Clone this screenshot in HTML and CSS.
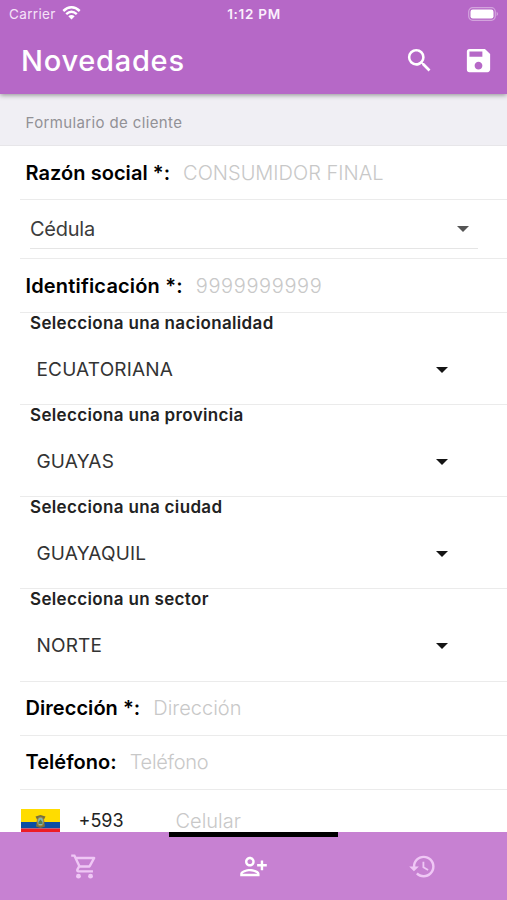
FILE: index.html
```html
<!DOCTYPE html>
<html lang="es">
<head>
<meta charset="utf-8">
<title>Novedades</title>
<link rel="stylesheet" href="styles.css">
</head>
<body>
<div class="app">
  <header class="header">
    <div class="status">
      <div class="carrier"><span>Carrier</span>
        <svg class="wifi" viewBox="0 0 18 14"><path d="M.8 5Q9-2.400 17.200 5M3.700 8.100Q9 3.500 14.300 8.100" fill="none" stroke="#fff" stroke-width="2.500"/><path d="M9 13.500 5.800 10.300Q9 7.800 12.200 10.300Z" fill="#fff"/></svg>
      </div>
      <span class="clock">1:12 PM</span>
      <svg class="battery" viewBox="0 0 31 14"><rect x=".7" y=".7" width="26.6" height="12.6" rx="4" fill="none" stroke="#fff" stroke-opacity=".4" stroke-width="1.2"/><rect x="2.5" y="2.5" width="23" height="9" rx="2.2" fill="#fff"/><path d="M28.7 4.8Q31 7 28.7 9.2Z" fill="#fff" fill-opacity=".5"/></svg>
    </div>
    <div class="toolbar">
      <h1>Novedades</h1>
      <svg class="action" viewBox="0 0 24 24"><path d="M15.5 14h-.79l-.28-.27A6.47 6.47 0 0 0 16 9.5 6.5 6.5 0 1 0 9.5 16c1.61 0 3.09-.59 4.23-1.57l.27.28v.79l5 4.99L20.49 19l-4.99-5zm-6 0C7.01 14 5 11.99 5 9.5S7.01 5 9.5 5 14 7.01 14 9.5 11.99 14 9.5 14z"/></svg>
      <svg class="action" viewBox="0 0 24 24"><path d="M17 3H5a2 2 0 0 0-2 2v14a2 2 0 0 0 2 2h14c1.1 0 2-.9 2-2V7l-4-4zm-5 16c-1.66 0-3-1.34-3-3s1.34-3 3-3 3 1.34 3 3-1.34 3-3 3zm3-10H5V5h10v4z"/></svg>
    </div>
  </header>
  <main class="form">
    <div class="section"><span>Formulario de cliente</span></div>
    <div class="row"><label>Razón social *:</label><span class="hint">CONSUMIDOR FINAL</span></div>
    <div class="row type"><div class="picker"><span>Cédula</span><svg class="caret" viewBox="0 0 12 6"><path d="M0 0h12L6 6z"/></svg></div></div>
    <div class="row"><label class="ident">Identificación *:</label><span class="hint digits">9999999999</span></div>
    <div class="select"><b>Selecciona una nacionalidad</b><div class="value"><span>ECUATORIANA</span><svg class="caret" viewBox="0 0 12 6"><path d="M0 0h12L6 6z"/></svg></div></div>
    <div class="select"><b>Selecciona una provincia</b><div class="value"><span>GUAYAS</span><svg class="caret" viewBox="0 0 12 6"><path d="M0 0h12L6 6z"/></svg></div></div>
    <div class="select"><b>Selecciona una ciudad</b><div class="value"><span>GUAYAQUIL</span><svg class="caret" viewBox="0 0 12 6"><path d="M0 0h12L6 6z"/></svg></div></div>
    <div class="select last"><b>Selecciona un sector</b><div class="value"><span>NORTE</span><svg class="caret" viewBox="0 0 12 6"><path d="M0 0h12L6 6z"/></svg></div></div>
    <div class="row low"><label>Dirección *:</label><span class="hint">Dirección</span></div>
    <div class="row low"><label>Teléfono:</label><span class="hint tight">Teléfono</span></div>
    <div class="phone">
      <svg class="flag" viewBox="0 0 39 26"><path fill="#ffdc00" d="M0 0h39v13H0z"/><path fill="#0b4ea2" d="M0 13h39v6.5H0z"/><path fill="#ed1c24" d="M0 19.5h39V26H0z"/><path d="M14.5 7.5 19.5 6l5 1.5-1.5 3 1 7-4.500 1.500-4.500-1.500 1-7z" fill="#77713f"/><ellipse cx="19.500" cy="12.500" rx="3" ry="4.200" fill="#82b8b4" stroke="#b78a35"/><path d="M17.500 13l2-2.500 2 2.500v2h-4z" fill="#567e52"/></svg>
      <span class="code">+593</span><span class="hint">Celular</span>
    </div>
  </main>
  <nav class="tabs">
    <div class="tab"><svg viewBox="0 0 24 24"><path d="M15.550 13c.75 0 1.410-.410 1.750-1.030l3.580-6.490A.996.996 0 0 0 20.010 4H5.210l-.94-2H1v2h2l3.600 7.590-1.350 2.440C4.520 15.370 5.480 17 7 17h12v-2H7l1.100-2h7.450zM6.160 6h12.150l-2.760 5H8.530L6.160 6z"/><circle cx="7" cy="20" r="2"/><circle cx="17" cy="20" r="2"/></svg></div>
    <div class="tab active"><svg viewBox="0 0 24 24"><path d="M13 8c0-2.210-1.790-4-4-4S5 5.790 5 8s1.790 4 4 4 4-1.790 4-4zm-2 0c0 1.100-.9 2-2 2s-2-.9-2-2 .9-2 2-2 2 .9 2 2zM1 18v2h16v-2c0-2.660-5.330-4-8-4s-8 1.340-8 4zm2 0c.2-.71 3.300-2 6-2 2.690 0 5.770 1.280 6 2H3zm17-3v-3h3v-2h-3V7h-2v3h-3v2h3v3h2z"/></svg></div>
    <div class="tab"><svg viewBox="0 0 24 24"><path d="M13 3a9 9 0 0 0-9 9H1l3.890 3.890.07.140L9 12H6c0-3.870 3.130-7 7-7s7 3.130 7 7-3.130 7-7 7c-1.930 0-3.680-.790-4.940-2.060l-1.420 1.420A8.954 8.954 0 0 0 13 21a9 9 0 0 0 0-18zm-1 5v5l4.280 2.540.72-1.210-3.500-2.080V8H12z"/></svg></div>
  </nav>
</div>
</body>
</html>
```
FILE: styles.css
```css
* { box-sizing: border-box; }
body { margin: 0; background: #fff; font-family: Inter, "Liberation Sans", sans-serif; }
.app { width: 507px; height: 900px; display: flex; flex-direction: column; overflow: hidden; }
svg { display: block; flex: none; }
span, label, b, h1 { white-space: nowrap; }
.header { height: 94px; flex: none; background: #b668c7; color: #fff; box-shadow: 0 1px 5px rgba(0,0,0,.42); z-index: 1; }
.status { height: 27px; padding: 0 8px 0 9px; display: grid; grid-template-columns: 1fr auto 1fr; align-items: center; font-size: 13px; }
.carrier { display: flex; align-items: center; gap: 6px; font-size: 13.5px; letter-spacing: .35px; color: #f5e3f8; }
.wifi { width: 19px; height: 14px; margin-top: -2px; }
.clock { font-size: 13.5px; font-weight: 600; letter-spacing: .7px; color: #fbeffd; }
.battery { width: 31px; height: 14px; justify-self: end; }
.toolbar { height: 67px; display: flex; align-items: center; padding: 0 13.5px 0 21px; gap: 28px; }
.toolbar .action { margin-top: -1px; }
h1 { flex: 1; margin: 0; font-size: 29px; line-height: 36px; font-weight: 500; letter-spacing: .75px; }
.action { width: 31px; height: 31px; fill: #fff; }
.form { height: 738px; flex: none; overflow: hidden; }
.section { height: 52px; background: #f0eff4; border-bottom: 1px solid #e7e6e9; padding: 5px 0 0 25.5px; display: flex; align-items: center; font-size: 15px; letter-spacing: .37px; color: #929196; }
.row { height: 54px; margin-left: 20px; padding-left: 5.5px; display: flex; align-items: center; gap: 13px; border-bottom: 1px solid #ebebeb; font-size: 20px; }
.row label { font-weight: 600; letter-spacing: .05px; color: #000; }
.row .ident { letter-spacing: .17px; }
.hint { color: #c8c8c8; font-weight: 300; font-size: 20px; }
.digits { letter-spacing: .64px; }
.tight { letter-spacing: -.3px; }
.low { padding-bottom: 2px; }
.type { height: 59px; padding: 0 29px 0 10px; }
.picker { flex: 1; height: 38px; display: flex; align-items: center; justify-content: space-between; padding-right: 9px; margin-top: 1px; border-bottom: 1px solid #e5e5e5; letter-spacing: -.25px; color: #3c3c3c; }
.caret { width: 12px; height: 6px; fill: #141414; }
.picker .caret { fill: #555; }
.select { height: 92px; margin-left: 20px; padding: 0 59px 0 10px; border-bottom: 1px solid #ebebeb; color: #222; }
.last { height: 93px; }
.select b { display: block; height: 20px; line-height: 20px; font-size: 17px; font-weight: 600; letter-spacing: .34px; }
.value { height: 73px; padding-left: 6.5px; display: flex; align-items: center; justify-content: space-between; font-size: 19px; letter-spacing: .18px; color: #333; }
.phone { height: 64px; margin-left: 20px; display: flex; align-items: center; line-height: 20px; }
.phone span { margin-top: -2px; }
.flag { width: 39px; height: 26px; margin-left: .5px; }
.phone .code { width: 97px; margin-left: 19px; font-size: 18px; color: #222; }
.tabs { height: 68px; flex: none; display: grid; grid-template-columns: repeat(3, 1fr); background: #c781d2; }
.tab { display: flex; justify-content: center; align-items: center; border-top: 5px solid transparent; padding-bottom: 5px; }
.tab svg { width: 29px; height: 29px; fill: #efc7f5; }
.active { border-top-color: #000; }
.active svg { fill: #fff; }
```
